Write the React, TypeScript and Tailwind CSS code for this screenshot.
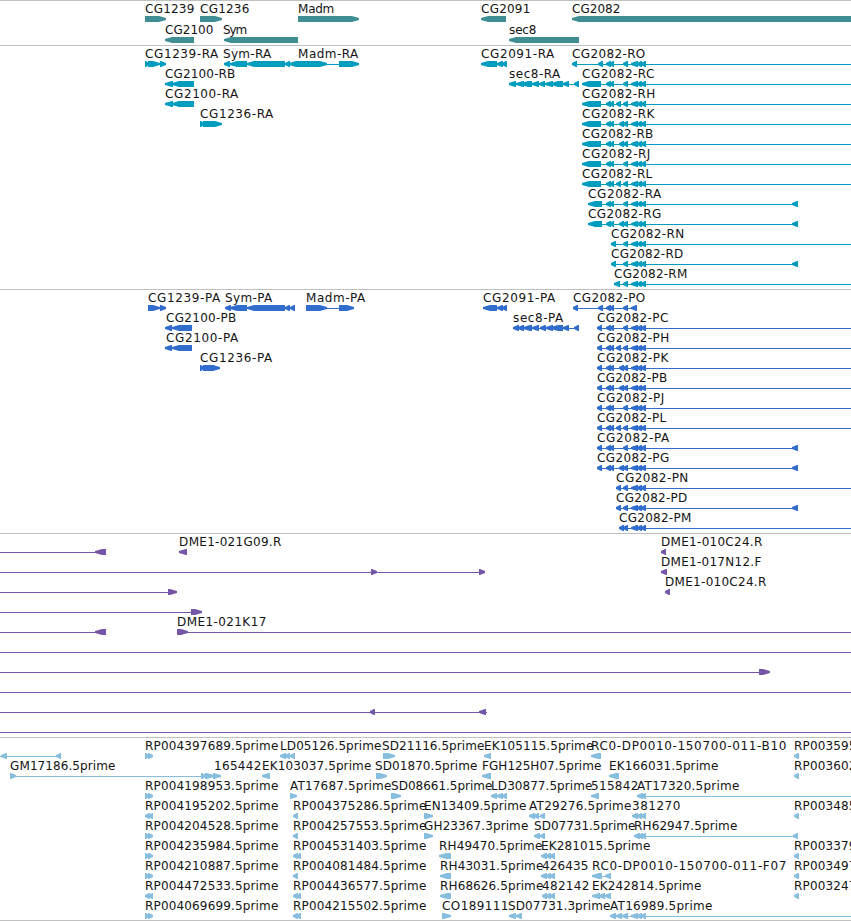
type Label = [text: string, x: number, end: number];
// Glyph tokens: "L582-601" / "R145-166" are exons pointing left / right, "_572-851" is an intron line.
type Row = { labels?: Label[]; glyphs: string };

const TAIL = "L631-638 L637-642 L641-646";
const PAIR = "L606-611 L610-614";
const TWIN = "L619-624 L623-628";

const genes: Row[] = [
  {
    labels: [["CG1239", 145, 194], ["CG1236", 200, 249], ["Madm", 298, 334], ["CG2091", 481, 530], ["CG2082", 572, 620]],
    glyphs: "R145-166 R200-222 R298-359 L481-506 L572-870",
  },
  { labels: [["CG2100", 165, 213], ["Sym", 223, 247], ["sec8", 509, 536]], glyphs: "L165-194 L224-298 L509-579" },
];

const transcripts: Row[] = [
  {
    labels: [["CG1239-RA", 145, 218], ["Sym-RA", 223, 271], ["Madm-RA", 298, 358], ["CG2091-RA", 481, 554], ["CG2082-RO", 572, 645]],
    glyphs: `_145-166 R145-149 R148-160 R160-166 _224-359 L224-230 L230-247 L247-285 L285-290 L289-298 R298-327 R339-359 _481-507 L481-497 L497-503 L502-507 _572-851 L572-577 L598-603 ${PAIR} L623-628 ${TAIL}`,
  },
  {
    labels: [["CG2100-RB", 165, 235], ["sec8-RA", 509, 560], ["CG2082-RC", 582, 654]],
    glyphs: `_165-194 L165-173 L172-194 _509-579 L509-516 L516-524 L521-532 L532-539 L539-545 L545-553 L551-563 L563-569 L574-579 _582-851 L582-601 ${PAIR} L623-628 ${TAIL}`,
  },
  {
    labels: [["CG2100-RA", 165, 238], ["CG2082-RH", 582, 655]],
    glyphs: `_165-194 L165-173 L172-194 _582-851 L582-601 ${PAIR} L616-621 L623-628 ${TAIL}`,
  },
  {
    labels: [["CG1236-RA", 200, 273], ["CG2082-RK", 582, 654]],
    glyphs: `R200-204 R203-222 _582-851 L582-601 ${PAIR} ${TWIN} ${TAIL}`,
  },
  { labels: [["CG2082-RB", 582, 653]], glyphs: `_582-851 L582-601 ${PAIR} ${TWIN} ${TAIL}` },
  { labels: [["CG2082-RJ", 582, 650]], glyphs: `_582-851 L582-601 ${PAIR} L623-628 ${TAIL}` },
  { labels: [["CG2082-RL", 582, 652]], glyphs: `_582-851 L582-601 ${PAIR} L616-621 L623-628 ${TAIL}` },
  { labels: [["CG2082-RA", 588, 661]], glyphs: `_588-798 L588-602 ${PAIR} L623-628 ${TAIL} L792-798` },
  { labels: [["CG2082-RG", 588, 661]], glyphs: `_588-798 L588-602 ${PAIR} ${TWIN} ${TAIL} L792-798` },
  { labels: [["CG2082-RN", 611, 684]], glyphs: `_611-851 L611-616 L623-628 ${TAIL}` },
  { labels: [["CG2082-RD", 611, 683]], glyphs: `_611-798 L611-616 L623-628 ${TAIL} L792-798` },
  { labels: [["CG2082-RM", 614, 687]], glyphs: `_614-851 L614-620 L623-628 ${TAIL}` },
];

const proteins: Row[] = [
  {
    labels: [["CG1239-PA", 148, 220], ["Sym-PA", 225, 272], ["Madm-PA", 306, 365], ["CG2091-PA", 483, 555], ["CG2082-PO", 573, 645]],
    glyphs: `R148-160 R160-166 _225-295 L225-231 L230-247 L247-285 L285-290 L290-295 _306-354 R306-327 R339-354 _483-507 L483-497 L497-503 L502-507 _573-637 L573-578 L598-603 ${PAIR} L623-628 L631-637`,
  },
  {
    labels: [["CG2100-PB", 166, 236], ["sec8-PA", 513, 563], ["CG2082-PC", 597, 668]],
    glyphs: `_165-192 L165-172 L172-192 _513-579 L513-519 L518-524 L523-532 L532-539 L540-546 L546-553 L551-563 L563-569 L574-579 _597-851 L597-602 ${PAIR} L623-628 ${TAIL}`,
  },
  {
    labels: [["CG2100-PA", 166, 238], ["CG2082-PH", 597, 669]],
    glyphs: `_165-192 L165-172 L172-192 _597-851 L597-602 ${PAIR} L616-621 L623-628 ${TAIL}`,
  },
  {
    labels: [["CG1236-PA", 200, 272], ["CG2082-PK", 597, 668]],
    glyphs: `R200-204 R203-220 _597-851 L597-602 ${PAIR} ${TWIN} ${TAIL}`,
  },
  { labels: [["CG2082-PB", 597, 667]], glyphs: `_597-851 L597-602 ${PAIR} ${TWIN} ${TAIL}` },
  { labels: [["CG2082-PJ", 597, 664]], glyphs: `_597-851 L597-602 ${PAIR} L623-628 ${TAIL}` },
  { labels: [["CG2082-PL", 597, 666]], glyphs: `_597-851 L597-602 ${PAIR} L616-621 L623-628 ${TAIL}` },
  { labels: [["CG2082-PA", 597, 669]], glyphs: `_597-798 L597-602 ${PAIR} L623-628 ${TAIL} L792-798` },
  { labels: [["CG2082-PG", 597, 669]], glyphs: `_597-798 L597-602 ${PAIR} ${TWIN} ${TAIL} L792-798` },
  { labels: [["CG2082-PN", 616, 688]], glyphs: `_616-851 L616-621 L623-628 ${TAIL}` },
  { labels: [["CG2082-PD", 616, 687]], glyphs: `_616-798 L616-621 L623-628 ${TAIL} L792-798` },
  { labels: [["CG2082-PM", 619, 691]], glyphs: `_619-851 ${TWIN} ${TAIL}` },
];

const bacEnds: Row[] = [
  { labels: [["DME1-021G09.R", 179, 281], ["DME1-010C24.R", 661, 762]], glyphs: "_0-96 L95-106 L179-187 L661-666" },
  { labels: [["DME1-017N12.F", 661, 761]], glyphs: "_0-484 R371-377 R479-485 L661-667" },
  { labels: [["DME1-010C24.R", 665, 766]], glyphs: "_0-170 R168-177 L665-670" },
  { glyphs: "_0-192 R191-202" },
  { labels: [["DME1-021K17", 177, 266]], glyphs: "_0-96 L95-106 R177-188 _186-851" },
  { glyphs: "_0-851" },
  { glyphs: "_0-769 R759-770" },
  { glyphs: "_0-851" },
  { glyphs: "_0-487 L370-375 L479-486" },
  { glyphs: "_0-851" },
];

const ests: Row[] = [
  {
    labels: [["RP004397689.5prime", 145, 278], ["LD05126.5prime", 280, 381], ["SD21116.5prime", 382, 484], ["EK105115.5prime", 484, 593], ["RC0-DP0010-150700-011-B10", 591, 786], ["RP003595", 794, 856]],
    glyphs: "_0-61 L1-7 L56-61 R145-149 R148-153 L280-286 L285-290 L290-295 R383-395 L484-491 L591-601 L794-799",
  },
  {
    labels: [["GM17186.5prime", 10, 115], ["165442", 214, 261], ["EK103037.5prime", 262, 371], ["SD01870.5prime", 375, 477], ["FGH125H07.5prime", 482, 601], ["EK166031.5prime", 609, 718], ["RP003602", 794, 856]],
    glyphs: "_10-221 R10-16 R201-206 R205-214 R213-221 L262-270 R376-387 L482-491 L609-619 L794-799",
  },
  {
    labels: [["RP004198953.5prime", 145, 278], ["AT17687.5prime", 290, 391], ["SD08661.5prime", 391, 492], ["LD30877.5prime", 491, 592], ["515842", 591, 638], ["AT17320.5prime", 637, 739]],
    glyphs: "R145-149 R148-153 R290-297 R391-401 L491-497 L497-503 L502-507 L591-599 _637-851 L637-643 L641-646",
  },
  {
    labels: [["RP004195202.5prime", 145, 278], ["RP004375286.5prime", 293, 426], ["EN13409.5prime", 424, 526], ["AT29276.5prime", 529, 631], ["381270", 632, 680], ["RP003485", 794, 856]],
    glyphs: "L145-150 L149-153 L293-298 R424-433 _529-545 L529-535 L534-539 L540-545 L632-638 L637-642 L641-646 L794-799",
  },
  {
    labels: [["RP004204528.5prime", 145, 278], ["RP004257553.5prime", 293, 426], ["GH23367.3prime", 424, 528], ["SD07731.5prime", 534, 635], ["RH62947.5prime", 634, 737]],
    glyphs: "R145-149 R148-153 L293-298 R424-433 L534-540 L540-545 _634-798 L634-640 L638-643 L641-646 L793-798",
  },
  {
    labels: [["RP004235984.5prime", 145, 278], ["RP004531403.5prime", 293, 426], ["RH49470.5prime", 439, 542], ["EK281015.5prime", 541, 650], ["RP003379", 794, 856]],
    glyphs: "R145-149 R148-153 L293-298 L297-301 L439-451 L541-547 L546-551 L550-555 L794-799",
  },
  {
    labels: [["RP004210887.5prime", 145, 278], ["RP004081484.5prime", 293, 426], ["RH43031.5prime", 440, 543], ["426435", 542, 588], ["RC0-DP0010-150700-011-F07", 592, 786], ["RP003497", 794, 856]],
    glyphs: "R145-149 R148-153 L293-298 L440-451 L541-547 L546-551 L550-555 _592-611 L592-602 L605-611 L794-799",
  },
  {
    labels: [["RP004472533.5prime", 145, 278], ["RP004436577.5prime", 293, 426], ["RH68626.5prime", 440, 543], ["482142", 542, 589], ["EK242814.5prime", 592, 701], ["RP003247", 794, 856]],
    glyphs: "L145-150 L149-153 L293-298 L297-301 L440-451 L542-547 L546-551 L550-555 L592-600 L599-605 L605-611 L794-799",
  },
  {
    labels: [["RP004069699.5prime", 145, 278], ["RP004215502.5prime", 293, 426], ["CO189111", 442, 508], ["SD07731.3prime", 508, 610], ["AT16989.5prime", 610, 712]],
    glyphs: "R145-149 R148-153 L293-298 L297-301 R442-451 L509-516 L516-522 _610-851 L610-616 L616-622 L622-628 L631-638 L637-642 L641-646",
  },
];

function Glyph({ token, top }: { token: string; top: number }) {
  const kind = token[0];
  const [a, b] = token.slice(1).split("-").map(Number);
  if (kind === "_") return <rect x={a} y={top + 3} width={b - a} height={1} />;
  const taper = Math.min(b - a - 1, 7);
  const mid = top + 3;
  const tip = kind === "L" ? a : b;
  const tail = kind === "L" ? b : a;
  const s = kind === "L" ? 1 : -1;
  const shoulder = tip + s * taper;
  return (
    <polygon
      points={`${tip},${mid - 1} ${shoulder},${top} ${tail},${top} ${tail},${top + 6} ${shoulder},${top + 6} ${tip},${mid + 1}`}
    />
  );
}

function Track({ rows, step = 20, height, color }: { rows: Row[]; step?: number; height: number; color: string }) {
  return (
    <section className="border-t border-[#c0c0c0]">
      <svg width="851" height={height} className={`block overflow-hidden ${color}`}>
        {rows.map((row, i) => {
          const baseline = 12 + i * step;
          return (
            <g key={i}>
              <g fill="currentColor">
                {row.glyphs.split(" ").map((t, k) => (
                  <Glyph key={k} token={t} top={baseline + 3} />
                ))}
              </g>
              {row.labels?.map(([text, x, end]) => (
                <text
                  key={text}
                  x={x + 0.1}
                  y={baseline}
                  textLength={end - x + 0.2}
                  className="fill-[#141414] font-['DejaVu_Sans',sans-serif] text-[12px]"
                >
                  {text}
                </text>
              ))}
            </g>
          );
        })}
      </svg>
    </section>
  );
}

export default function App() {
  return (
    <main className="flex h-[921px] w-[851px] flex-col overflow-hidden border-b border-[#c0c0c0] bg-white">
      <Track rows={genes} step={21} height={44} color="text-[#3e8e93]" />
      <Track rows={transcripts} height={243} color="text-[#009dbf]" />
      <Track rows={proteins} height={243} color="text-[#306dcd]" />
      <Track rows={bacEnds} height={203} color="text-[#7557a8]" />
      <Track rows={ests} height={182} color="text-[#87bddd]" />
    </main>
  );
}
